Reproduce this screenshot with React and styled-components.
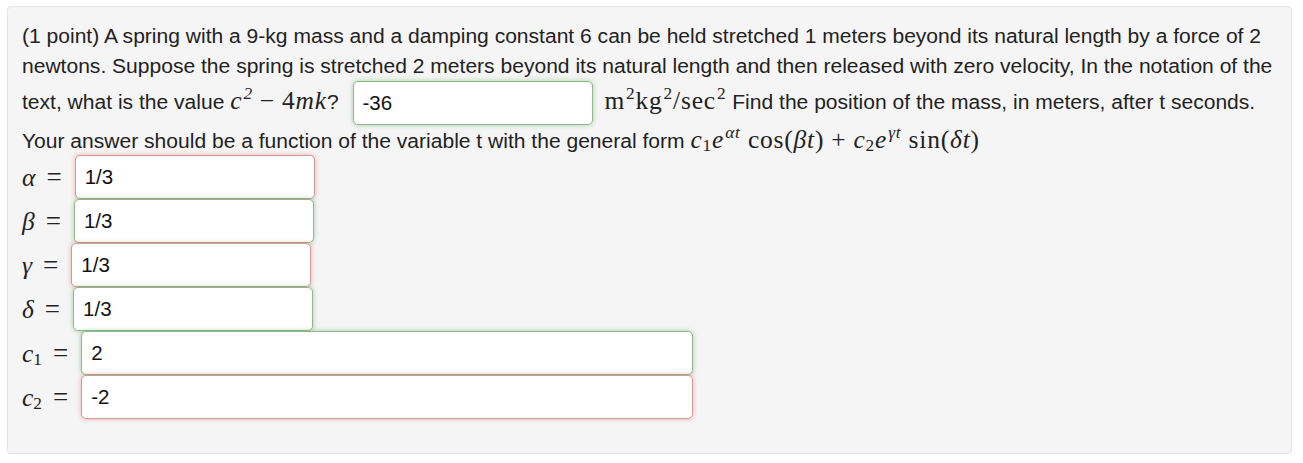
import React from "react";
import styled, { createGlobalStyle } from "styled-components";

const Global = createGlobalStyle`
	body {
		margin: 0;
		background: #ffffff;
		font-family: "Liberation Sans", Arial, sans-serif;
		color: #222;
	}
`;

const Well = styled.div`
	margin: 6px 11px 8px 7px;
	padding: 14px 14px 34px 14px;
	background: #f5f5f5;
	border: 1px solid #e3e3e3;
	border-radius: 4px;
	font-size: 21.05px;
	line-height: 30px;
`;

const Para = styled.div`
	line-height: 30px;
`;

const M = styled.span`
	font-family: "Liberation Serif", "DejaVu Serif", serif;
	font-style: ${(p) => (p.$up ? "normal" : "italic")};
	font-size: 25.5px;
	letter-spacing: 0.8px;
	white-space: nowrap;
	margin-left: ${(p) => p.$ml || 0}px;
`;

const Up = styled.span`
	font-style: normal;
`;

const Op = styled.span`
	font-style: normal;
	margin: 0 7px;
`;

const Sup = styled.sup`
	font-size: 0.68em;
	line-height: 0;
	vertical-align: 0.55em;
	margin-left: 1px;
`;

const Sub = styled.sub`
	font-size: 0.68em;
	line-height: 0;
	vertical-align: -0.2em;
	font-style: normal;
`;

const Answer = styled.input`
	box-sizing: border-box;
	width: ${(p) => p.$w}px;
	height: 44px;
	margin: 0 0 0 ${(p) => p.$ml || 0}px;
	padding: 0 9px;
	font-family: "Liberation Sans", Arial, sans-serif;
	font-size: 20.5px;
	color: #111;
	background: #fff;
	border-radius: 5px;
	border: 1px solid ${(p) => (p.$ok ? "#8fb98a" : "#d49a9a")};
	box-shadow: 0 0 5px ${(p) => (p.$ok ? "rgba(60, 160, 60, 0.45)" : "rgba(220, 70, 70, 0.4)")};
	vertical-align: middle;
	outline: none;
`;

const Rows = styled.div`
	display: flex;
	flex-direction: column;
	margin-top: -1px;
`;

const Row = styled.div`
	display: flex;
	align-items: center;
	height: 44px;
`;

const Label = styled.span`
	font-family: "Liberation Serif", "DejaVu Serif", serif;
	font-size: 25.5px;
	white-space: nowrap;
	color: #222;
`;

const Var = styled.i``;

const Eq = styled.span`
	margin-left: 11px;
	font-size: 27px;
`;

const rows = [
	{ v: <Var>α</Var>, val: "1/3", ok: false, w: 240 },
	{ v: <Var>β</Var>, val: "1/3", ok: true, w: 240 },
	{ v: <Var>γ</Var>, val: "1/3", ok: false, w: 240 },
	{ v: <Var>δ</Var>, val: "1/3", ok: true, w: 240 },
	{ v: <><Var>c</Var><Sub>1</Sub></>, val: "2", ok: true, w: 612 },
	{ v: <><Var>c</Var><Sub>2</Sub></>, val: "-2", ok: false, w: 612 },
];

const App = () => {
	return (
		<>
			<Global />
			<Well>
				<Para>
					(1 point) A spring with a 9-kg mass and a damping constant 6 can be held stretched 1 meters beyond its natural length by a force of 2 newtons. Suppose the spring is stretched 2 meters beyond its natural length and then released with zero velocity, In the notation of the text, what is the value{" "}
					<M>
						c<Sup>2</Sup>
						<Op>−</Op>
						<Up>4</Up>mk
					</M>
					?{" "}
					<Answer $w={240} $ml={8} $ok defaultValue="-36" />{" "}
					<M $up $ml={6}>
						m<Sup>2</Sup>kg<Sup>2</Sup>/sec<Sup>2</Sup>
					</M>{" "}
					Find the position of the mass, in meters, after t seconds.
					<br />
					Your answer should be a function of the variable t with the general form{" "}
					<M>
						c<Sub>1</Sub>e<Sup>αt</Sup> <Up>cos(</Up>βt<Up>)</Up>
						<Op>+</Op>c<Sub>2</Sub>e<Sup>γt</Sup> <Up>sin(</Up>δt<Up>)</Up>
					</M>
				</Para>
				<Rows>
					{rows.map((r, i) => (
						<Row key={i}>
							<Label>
								{r.v}
								<Eq>=</Eq>
							</Label>
							<Answer $w={r.w} $ml={13} $ok={r.ok} defaultValue={r.val} />
						</Row>
					))}
				</Rows>
			</Well>
		</>
	);
};

export default App;
